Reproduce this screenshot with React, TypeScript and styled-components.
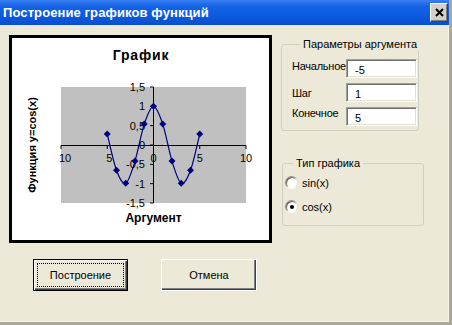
import { useState } from "react";
import styled, { createGlobalStyle } from "styled-components";

const GlobalStyle = createGlobalStyle`
  html, body {
    margin: 0;
    padding: 0;
    background: #ece9d8;
  }
`;

const points = [-5, -4, -3, -2, -1, 0, 1, 2, 3, 4, 5].map((x) => ({
  x: 153.5 + 9.25 * x,
  y: 145 - 38.67 * Math.cos(x),
}));

// smooth line through the points, like Excel's "smoothed line"
const buildCurve = () => {
  let d = `M ${points[0].x} ${points[0].y}`;
  for (let i = 0; i < points.length - 1; i++) {
    const p0 = points[Math.max(i - 1, 0)];
    const p1 = points[i];
    const p2 = points[i + 1];
    const p3 = points[Math.min(i + 2, points.length - 1)];
    const c1x = p1.x + (p2.x - p0.x) / 6;
    const c1y = p1.y + (p2.y - p0.y) / 6;
    const c2x = p2.x - (p3.x - p1.x) / 6;
    const c2y = p2.y - (p3.y - p1.y) / 6;
    d += ` C ${c1x} ${c1y} ${c2x} ${c2y} ${p2.x} ${p2.y}`;
  }
  return d;
};

const yTicks = [
  { v: 1.5, label: "1,5" },
  { v: 1, label: "1" },
  { v: 0.5, label: "0,5" },
  { v: 0, label: "0" },
  { v: -0.5, label: "-0,5" },
  { v: -1, label: "-1" },
  { v: -1.5, label: "-1,5" },
];

const xTicks = [
  { v: -10, label: "10", shift: 4 },
  { v: -5, label: "5", shift: 2 },
  { v: 0, label: "0", shift: 0 },
  { v: 5, label: "5", shift: 0 },
  { v: 10, label: "10", shift: 0 },
];

const chartFont = "Liberation Sans, Arial, sans-serif";

const Chart = () => (
  <svg width="257" height="202" viewBox="12 38 257 202">
    <text x="141" y="60" textAnchor="middle" fontFamily={chartFont} fontWeight="bold" fontSize="14" letterSpacing="0.8">
      График
    </text>
    <rect x="61" y="87" width="185" height="116" fill="#c0c0c0" />
    <line x1="61" y1="145.5" x2="246" y2="145.5" stroke="#000" strokeWidth="1" />
    <line x1="153.5" y1="87" x2="153.5" y2="203" stroke="#000" strokeWidth="1" />
    {yTicks.map((t) => {
      const y = 145 - 38.67 * t.v;
      return (
        <g key={t.label}>
          <line x1="150" y1={y} x2="153.5" y2={y} stroke="#000" />
          <text x="145" y={y + 4} textAnchor="end" fontFamily={chartFont} fontSize="11">
            {t.label}
          </text>
        </g>
      );
    })}
    {xTicks.map((t) => {
      const x = 153.5 + 9.25 * t.v;
      return (
        <g key={t.v}>
          <line x1={x} y1="145.5" x2={x} y2="149" stroke="#000" />
          <text x={x + t.shift} y="162" textAnchor="middle" fontFamily={chartFont} fontSize="11">
            {t.label}
          </text>
        </g>
      );
    })}
    <path d={buildCurve()} fill="none" stroke="#000080" strokeWidth="1.2" />
    {points.map((p, i) => (
      <polygon
        key={i}
        points={`${p.x},${p.y - 3.5} ${p.x + 3.5},${p.y} ${p.x},${p.y + 3.5} ${p.x - 3.5},${p.y}`}
        fill="#000080"
      />
    ))}
    <text x="153.5" y="222" textAnchor="middle" fontFamily={chartFont} fontWeight="bold" fontSize="12">
      Аргумент
    </text>
    <text
      x="0"
      y="0"
      transform="translate(36 145) rotate(-90)"
      textAnchor="middle"
      fontFamily={chartFont}
      fontWeight="bold"
      fontSize="11"
    >
      Функция y=cos(x)
    </text>
  </svg>
);

export default function App() {
  const [start, setStart] = useState("-5");
  const [step, setStep] = useState("1");
  const [end, setEnd] = useState("5");
  const [kind, setKind] = useState("cos");

  return (
    <Window>
      <GlobalStyle />
      <TitleBar>
        <Title>Построение графиков функций</Title>
        <CloseButton>
          <svg width="9" height="9" viewBox="0 0 9 9">
            <path d="M1 1 L8 8 M8 1 L1 8" stroke="#000" strokeWidth="2" />
          </svg>
        </CloseButton>
      </TitleBar>
      <Body>
        <MainRow>
          <ChartFrame>
            <Chart />
          </ChartFrame>
          <SidePanel>
            <GroupBox $width={138} $height={94} $padLeft={10}>
              <Legend>Параметры аргумента</Legend>
              <FieldStack>
                <FieldRow>
                  <FieldLabel $lift={3}>Начальное</FieldLabel>
                  <TextInput value={start} onChange={(e) => setStart(e.target.value)} />
                </FieldRow>
                <FieldRow>
                  <FieldLabel $lift={0}>Шаг</FieldLabel>
                  <TextInput value={step} onChange={(e) => setStep(e.target.value)} />
                </FieldRow>
                <FieldRow>
                  <FieldLabel $lift={4}>Конечное</FieldLabel>
                  <TextInput value={end} onChange={(e) => setEnd(e.target.value)} />
                </FieldRow>
              </FieldStack>
            </GroupBox>
            <GroupBox $width={142} $height={70} $top={25} $left={1} $padLeft={2}>
              <Legend>Тип графика</Legend>
              <RadioStack>
                <RadioRow onClick={() => setKind("sin")}>
                  <RadioCircle $checked={kind === "sin"} />
                  sin(x)
                </RadioRow>
                <RadioRow onClick={() => setKind("cos")}>
                  <RadioCircle $checked={kind === "cos"} />
                  cos(x)
                </RadioRow>
              </RadioStack>
            </GroupBox>
          </SidePanel>
        </MainRow>
        <ButtonRow>
          <DialogButton $isDefault>
            <FocusRing>Построение</FocusRing>
          </DialogButton>
          <DialogButton>
            <FocusRing $hidden>Отмена</FocusRing>
          </DialogButton>
        </ButtonRow>
      </Body>
    </Window>
  );
}

const Window = styled.div`
  width: 452px;
  height: 325px;
  box-sizing: border-box;
  display: flex;
  flex-direction: column;
  background: #ece9d8;
  border-right: 3px solid #aca899;
  border-bottom: 3px solid #aca899;
  box-shadow: inset -1px -1px 0 #f6f4ec;
  font-family: "Liberation Sans", Arial, sans-serif;
  font-size: 11px;
  color: #000;
  overflow: hidden;
`;

const TitleBar = styled.div`
  height: 25px;
  margin-right: -3px;
  display: flex;
  align-items: center;
  justify-content: space-between;
  padding: 0 4px 0 3px;
  background: linear-gradient(#3a80f3 0%, #1462e6 25%, #0a58dc 70%, #0a4fcc 100%);
`;

const Title = styled.span`
  color: #fff;
  font-weight: bold;
  font-size: 13px;
  letter-spacing: 0.1px;
`;

const CloseButton = styled.div`
  width: 18px;
  height: 19px;
  box-sizing: border-box;
  display: flex;
  align-items: center;
  justify-content: center;
  background: #d4d0c8;
  border-top: 1px solid #fff;
  border-left: 1px solid #fff;
  border-right: 1px solid #404040;
  border-bottom: 1px solid #404040;
  box-shadow: inset -1px -1px 0 #808080;
`;

const Body = styled.div`
  flex: 1;
  display: flex;
  flex-direction: column;
  padding: 10px 0 0 9px;
`;

const MainRow = styled.div`
  display: flex;
  gap: 9px;
`;

const ChartFrame = styled.div`
  width: 263px;
  height: 208px;
  box-sizing: border-box;
  border: 3px solid #000;
  background: #fff;
  display: flex;
`;

const SidePanel = styled.div`
  display: flex;
  flex-direction: column;
  align-items: flex-start;
  padding-top: 2px;
`;

const GroupBox = styled.fieldset<{
  $width: number;
  $height: number;
  $padLeft: number;
  $top?: number;
  $left?: number;
}>`
  width: ${(p) => p.$width}px;
  height: ${(p) => p.$height}px;
  box-sizing: border-box;
  margin: ${(p) => p.$top ?? 0}px 0 0 ${(p) => p.$left ?? 0}px;
  padding: 0 1px 0 ${(p) => p.$padLeft}px;
  border: 1px solid #d0d0bf;
  border-radius: 3px;
  min-width: 0;
`;

const Legend = styled.legend`
  padding: 0 3px;
  margin-left: 8px;
  line-height: 14px;
  font-size: 11px;
  white-space: nowrap;
`;

const FieldStack = styled.div`
  display: flex;
  flex-direction: column;
  gap: 5px;
  padding-top: 8px;
`;

const FieldRow = styled.div`
  display: flex;
  align-items: center;
  height: 19px;
`;

const FieldLabel = styled.span<{ $lift: number }>`
  width: 54px;
  flex-shrink: 0;
  white-space: nowrap;
  letter-spacing: -0.25px;
  position: relative;
  top: -${(p) => p.$lift}px;
`;

const TextInput = styled.input`
  width: 71px;
  height: 19px;
  box-sizing: border-box;
  padding: 2px 0 0 8px;
  margin: 0;
  font-family: "Liberation Sans", Arial, sans-serif;
  font-size: 11px;
  color: #000;
  background: #fff;
  border-top: 1px solid #a0a0a0;
  border-left: 1px solid #a0a0a0;
  border-right: 1px solid #fff;
  border-bottom: 1px solid #fff;
  box-shadow: inset 1px 1px 0 #707070, inset -1px -1px 0 #e4e2da;
  outline: none;
`;

const RadioStack = styled.div`
  display: flex;
  flex-direction: column;
  gap: 11px;
  padding-top: 6px;
`;

const RadioRow = styled.label`
  display: flex;
  align-items: center;
  gap: 4px;
  height: 13px;
  cursor: default;
`;

const RadioCircle = styled.span<{ $checked: boolean }>`
  width: 13px;
  height: 13px;
  box-sizing: border-box;
  border-radius: 50%;
  background: radial-gradient(circle at 60% 60%, #fff 40%, #e4e2da 100%);
  border: 1px solid;
  border-color: #909090 #e0e0e0 #ffffff #909090;
  box-shadow: inset 1px 1px 0 #606060;
  display: flex;
  align-items: center;
  justify-content: center;

  &::after {
    content: "";
    width: 4px;
    height: 4px;
    border-radius: 50%;
    background: #000;
    display: ${(p) => (p.$checked ? "block" : "none")};
  }
`;

const ButtonRow = styled.div`
  display: flex;
  gap: 33px;
  margin: 16px 0 0 24px;
`;

const DialogButton = styled.button<{ $isDefault?: boolean }>`
  width: ${(p) => (p.$isDefault ? 95 : 96)}px;
  height: 32px;
  box-sizing: border-box;
  padding: 3px;
  margin: 0;
  display: flex;
  background: #ece9d8;
  font-family: "Liberation Sans", Arial, sans-serif;
  font-size: 11px;
  color: #000;
  border: 1px solid ${(p) => (p.$isDefault ? "#000" : "#fff")};
  box-shadow: ${(p) =>
    p.$isDefault
      ? "inset 1px 1px 0 #fff, inset -1px -1px 0 #404040, inset -2px -2px 0 #808080"
      : "inset -1px -1px 0 #404040, inset -2px -2px 0 #808080"};
`;

const FocusRing = styled.span<{ $hidden?: boolean }>`
  flex: 1;
  display: flex;
  align-items: center;
  justify-content: center;
  border: 1px dotted ${(p) => (p.$hidden ? "transparent" : "#000")};
`;
